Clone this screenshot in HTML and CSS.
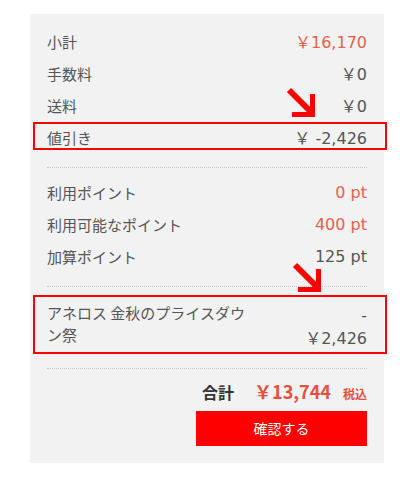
FILE: index.html
```html
<!DOCTYPE html>
<html lang="ja">
<head>
    <meta charset="UTF-8">
    <title>注文内容</title>
    <link rel="stylesheet" href="styles.css">
</head>
<body>
    <div class="summary">
        <div class="row">
            <span class="label">小計</span>
            <span class="value red">￥16,170</span>
        </div>
        <div class="row">
            <span class="label">手数料</span>
            <span class="value">￥0</span>
        </div>
        <div class="row">
            <span class="label">送料</span>
            <span class="value">￥0</span>
        </div>
        <div class="row marked">
            <span class="label">値引き</span>
            <span class="value">￥ -2,426</span>
        </div>

        <div class="divider"></div>

        <div class="row">
            <span class="label">利用ポイント</span>
            <span class="value red">0 pt</span>
        </div>
        <div class="row">
            <span class="label">利用可能なポイント</span>
            <span class="value red">400 pt</span>
        </div>
        <div class="row">
            <span class="label">加算ポイント</span>
            <span class="value">125 pt</span>
        </div>

        <div class="divider"></div>

        <div class="row promo">
            <span class="label">アネロス 金秋のプライスダウン祭</span>
            <span class="value">- ￥2,426</span>
        </div>

        <div class="divider"></div>

        <div class="total">
            <span class="total-label">合計</span>
            <span class="total-price">￥13,744</span>
            <span class="tax">税込</span>
        </div>
        <div class="actions">
            <a href="#" class="confirm-btn">確認する</a>
        </div>

        <!-- annotation arrows -->
        <svg class="arrow arrow-discount" width="32" height="32" viewBox="0 0 32 32">
            <line x1="3" y1="3" x2="25" y2="25" stroke="#f00" stroke-width="6"/>
            <polygon points="6,25 24,25 24,7 29,7 29,30 6,30" fill="#f00"/>
        </svg>
        <svg class="arrow arrow-promo" width="32" height="32" viewBox="0 0 32 32">
            <line x1="3" y1="3" x2="25" y2="25" stroke="#f00" stroke-width="6"/>
            <polygon points="6,25 24,25 24,7 29,7 29,30 6,30" fill="#f00"/>
        </svg>
    </div>
</body>
</html>
```

FILE: styles.css
```css
body {
    margin: 0;
    background-color: #ffffff;
    font-family: "DejaVu Sans", "Noto Sans CJK JP", sans-serif;
    color: #555555;
}

.summary {
    position: relative;
    width: 354px;
    height: 449px;
    box-sizing: border-box;
    margin: 14px 0 0 30px;
    padding: 11px 17px 16px;
    background-color: #f2f2f2; /* light gray panel */
}

.row {
    position: relative;
    display: flex;
    justify-content: space-between;
    align-items: center;
    height: 32px;
}

.label {
    font-size: 15px;
    font-family: "Noto Sans CJK JP", sans-serif;
}

.value {
    font-size: 16px;
    text-align: right;
}

.red {
    color: #e8604d;
}

/* red annotation frame */
.marked::after,
.promo::after {
    content: "";
    position: absolute;
    left: -14px;
    right: -20px;
    top: 1px;
    bottom: 3px;
    border: 2px solid #ff0000;
}

.promo {
    height: 59px;
    align-items: flex-start;
    padding-top: 7px;
    box-sizing: border-box;
}

.promo::after {
    top: 0;
    bottom: 0;
}

.promo .label {
    width: 210px;
    line-height: 22px;
}

.promo .value {
    width: 70px;
    line-height: 23px;
    padding-top: 2px;
}

.divider {
    border-top: 1px dotted #c8c8c8;
    margin: 14px 0 8px;
}

.total {
    display: flex;
    justify-content: flex-end;
    align-items: baseline;
    height: 28px;
    line-height: 28px;
}

.total-label {
    font-family: "Noto Sans CJK JP", sans-serif;
    font-weight: bold;
    font-size: 16px;
    color: #333333;
    margin-right: 20px;
}

.total-price {
    font-family: "Noto Sans CJK JP", sans-serif;
    font-weight: bold;
    font-size: 18px;
    color: #e8503e;
    margin-right: 12px;
}

.tax {
    font-family: "Noto Sans CJK JP", sans-serif;
    font-weight: bold;
    font-size: 12px;
    color: #e8503e;
}

.actions {
    display: flex;
    justify-content: flex-end;
    margin-top: 6px;
}

.confirm-btn {
    display: block;
    width: 171px;
    height: 35px;
    line-height: 35px;
    text-align: center;
    background-color: #ff0000;
    color: #ffffff;
    font-family: "Noto Sans CJK JP", sans-serif;
    font-size: 14px;
    text-decoration: none;
}

.arrow {
    position: absolute;
}

.arrow-discount {
    left: 256px;
    top: 73px;
}

.arrow-promo {
    left: 262px;
    top: 248px;
}
```
